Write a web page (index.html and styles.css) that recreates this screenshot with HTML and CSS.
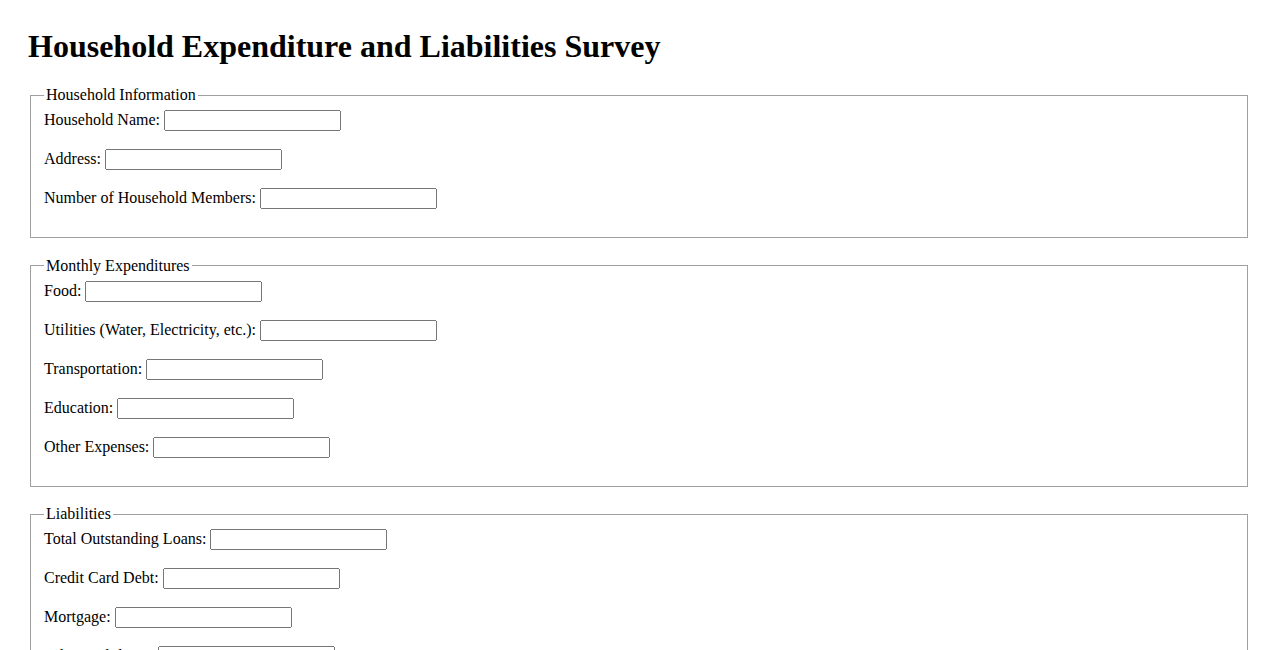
FILE: index.html
```html
<!DOCTYPE html>
<html>
<head>
<meta charset="utf-8">
<title>Household Expenditure and Liabilities Survey</title>
<link rel="stylesheet" href="styles.css">
</head>
<body>
<h1 class="title">Household Expenditure and Liabilities Survey</h1>
<form class="survey">
  <fieldset class="group">
    <legend class="group-title">Household Information</legend>
    <label for="hname">Household Name:</label> <input type="text" id="hname" class="field"><br><br>
    <label for="addr">Address:</label> <input type="text" id="addr" class="field"><br><br>
    <label for="members">Number of Household Members:</label> <input type="text" id="members" class="field"><br><br>
  </fieldset>
  <fieldset class="group">
    <legend class="group-title">Monthly Expenditures</legend>
    <label for="food">Food:</label> <input type="text" id="food" class="field"><br><br>
    <label for="util">Utilities (Water, Electricity, etc.):</label> <input type="text" id="util" class="field"><br><br>
    <label for="trans">Transportation:</label> <input type="text" id="trans" class="field"><br><br>
    <label for="edu">Education:</label> <input type="text" id="edu" class="field"><br><br>
    <label for="other">Other Expenses:</label> <input type="text" id="other" class="field"><br><br>
  </fieldset>
  <fieldset class="group">
    <legend class="group-title">Liabilities</legend>
    <label for="loans">Total Outstanding Loans:</label> <input type="text" id="loans" class="field"><br><br>
    <label for="cc">Credit Card Debt:</label> <input type="text" id="cc" class="field"><br><br>
    <label for="mort">Mortgage:</label> <input type="text" id="mort" class="field"><br><br>
    <label for="oliab">Other Liabilities:</label> <input type="text" id="oliab" class="field"><br><br>
  </fieldset>
</form>
</body>
</html>
```
FILE: styles.css
```css
html, body {
  background: #fff;
}
body {
  margin: 0;
  padding: 28px;
  font-family: "Liberation Serif", "Times New Roman", serif;
  font-size: 16px;
  color: #000;
}
.title {
  margin: 0 0 21px 0;
  font-size: 32px;
  font-weight: bold;
}
.survey {
  margin: 0;
}
.group {
  margin: 0 2px 18.5px 2px;
  padding: 6px 13px 10px 13px;
  border: 1px solid #a0a0a0;
}
.group-title {
  padding: 0 2px;
}
.field {
  box-sizing: border-box;
  width: 177px;
  height: 21px;
  font-family: Arial, "Liberation Sans", sans-serif;
  font-size: 13.33px;
}
```
